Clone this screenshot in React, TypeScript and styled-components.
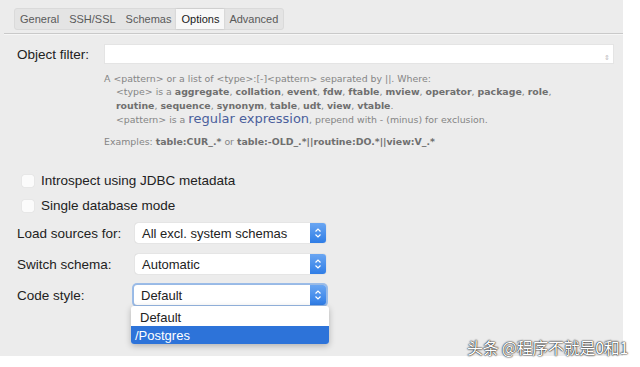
import styled, { createGlobalStyle } from "styled-components";

const Global = createGlobalStyle`
	html, body {
		margin: 0;
		padding: 0;
		background: #ffffff;
	}
	body {
		font-family: "Liberation Sans", Arial, sans-serif;
		color: #222;
	}
`;

const Page = styled.div`
	position: relative;
	width: 640px;
	height: 367px;
	overflow: hidden;
	background: #fff;
`;

const Window = styled.div`
	width: 623px;
	height: 356px;
	background: #ececec;
	display: flex;
	flex-direction: column;
`;

const TabBar = styled.div`
	display: flex;
	align-self: flex-start;
	margin: 8px 0 0 14px;
	height: 20px;
	background: #e4e4e4;
	border: 1px solid #dadada;
	border-radius: 3px;
`;

const Tab = styled.div<{ active?: boolean }>`
	display: flex;
	align-items: center;
	padding: 0 5px;
	font-size: 11px;
	color: ${({ active }) => (active ? "#1a1a1a" : "#5a5a5a")};
	background: ${({ active }) => (active ? "#f8f8f8" : "transparent")};
	box-shadow: ${({ active }) => (active ? "0 0 2px rgba(0,0,0,0.15)" : "none")};
`;

const Divider = styled.div`
	margin-top: 3px;
	height: 1px;
	background: #c9c9c9;
	border-bottom: 1px solid #f6f6f6;
	margin-left: 4px;
`;

const Body = styled.div`
	display: flex;
	flex-direction: column;
	padding: 9px 9px 0 17px;
`;

const FilterRow = styled.div`
	display: flex;
	align-items: center;
`;

const Label = styled.div<{ w?: number }>`
	width: ${({ w }) => w ?? 118}px;
	font-size: 13.5px;
	color: #222;
	flex-shrink: 0;
`;

const TextInput = styled.div`
	position: relative;
	flex: 1;
	height: 18px;
	background: #fff;
	border: 1px solid #e4e4e4;
`;

const Grip = styled.span`
	position: absolute;
	right: 3px;
	bottom: 1px;
	font-size: 7px;
	color: #bbb;
`;

const Help = styled.div`
	margin: 8px 0 0 87px;
	font-family: "DejaVu Sans", "Liberation Sans", sans-serif;
	font-size: 9.4px;
	line-height: 13.3px;
	color: #858585;
`;

const HelpLine = styled.div<{ indent?: boolean }>`
	padding-left: ${({ indent }) => (indent ? 12 : 0)}px;
	white-space: nowrap;
`;

const Bold = styled.b`
	color: #6f6f6f;
`;

const Link = styled.span`
	color: #4a5f9c;
	font-size: 13px;
`;

const Examples = styled.div`
	margin-top: 9px;
	white-space: nowrap;
`;

const Checks = styled.div`
	display: flex;
	flex-direction: column;
	gap: 8px;
	margin-top: 24px;
	padding-left: 5px;
`;

const CheckRow = styled.label`
	display: flex;
	align-items: center;
	gap: 7px;
	font-size: 13.5px;
	color: #222;
	height: 17px;
`;

const Box = styled.span`
	width: 12px;
	height: 12px;
	background: #fbfbfb;
	border-radius: 2px;
	box-shadow: 0 0 1px rgba(0, 0, 0, 0.2);
`;

const Fields = styled.div`
	display: flex;
	flex-direction: column;
	gap: 11px;
	margin-top: 9px;
`;

const FieldRow = styled.div`
	display: flex;
	align-items: center;
	height: 20px;
`;

const SelectWrap = styled.div`
	position: relative;
	width: 191px;
`;

const Select = styled.div<{ focused?: boolean }>`
	display: flex;
	align-items: center;
	height: 20px;
	background: #fff;
	border-radius: 3px;
	font-size: 13px;
	color: #222;
	padding-left: 7px;
	box-shadow: ${({ focused }) =>
		focused
			? "0 0 0 2px rgba(90, 150, 230, 0.55), 0 0 1px rgba(0,0,0,0.3)"
			: "0 0 1px rgba(0,0,0,0.3)"};
	margin-left: ${({ focused }) => (focused ? "-1px" : "0")};
`;

const SelectText = styled.span`
	flex: 1;
`;

const Stepper = styled.span`
	width: 16px;
	height: 20px;
	border-radius: 0 3px 3px 0;
	background: linear-gradient(#6aa6f2, #2f7de6);
	display: flex;
	align-items: center;
	justify-content: center;
`;

const Menu = styled.div`
	position: absolute;
	left: -4px;
	top: 21px;
	width: 198px;
	background: #fff;
	box-shadow: 0 2px 6px rgba(0, 0, 0, 0.25);
	border-radius: 3px;
	padding: 2px 0 0;
	z-index: 2;
`;

const MenuItem = styled.div<{ active?: boolean }>`
	height: 18px;
	display: flex;
	align-items: center;
	padding-left: ${({ active }) => (active ? 4 : 9)}px;
	font-size: 13px;
	color: ${({ active }) => (active ? "#fff" : "#222")};
	background: ${({ active }) => (active ? "#2d73d9" : "transparent")};
	border-radius: ${({ active }) => (active ? "0 0 3px 3px" : "0")};
`;

const Watermark = styled.div`
	position: absolute;
	right: 12px;
	bottom: 8px;
	font-family: "Noto Sans CJK SC", sans-serif;
	font-size: 16px;
	color: #fff;
	text-shadow: 0 0 2px #000, 0 0 1px #000;
	letter-spacing: -0.3px;
`;

const Arrows = () => (
	<svg width="8" height="12" viewBox="0 0 8 12">
		<path d="M1.5 4.5 L4 2 L6.5 4.5 M1.5 7.5 L4 10 L6.5 7.5" fill="none" stroke="#fff" strokeWidth="1.2" />
	</svg>
);

const SelectBox = ({ value, focused, children }: { value: string; focused?: boolean; children?: React.ReactNode }) => (
	<SelectWrap>
		<Select focused={focused}>
			<SelectText>{value}</SelectText>
			<Stepper>
				<Arrows />
			</Stepper>
		</Select>
		{children}
	</SelectWrap>
);

const App = () => {
	return (
		<Page>
			<Global />
			<Window>
				<TabBar>
					<Tab>General</Tab>
					<Tab>SSH/SSL</Tab>
					<Tab>Schemas</Tab>
					<Tab active>Options</Tab>
					<Tab>Advanced</Tab>
				</TabBar>
				<Divider />
				<Body>
					<FilterRow>
						<Label w={87}>Object filter:</Label>
						<TextInput>
							<Grip>⇕</Grip>
						</TextInput>
					</FilterRow>
					<Help>
						<HelpLine>A &lt;pattern&gt; or a list of &lt;type&gt;:[-]&lt;pattern&gt; separated by ||. Where:</HelpLine>
						<HelpLine indent>
							&lt;type&gt; is a <Bold>aggregate</Bold>, <Bold>collation</Bold>, <Bold>event</Bold>, <Bold>fdw</Bold>,{" "}
							<Bold>ftable</Bold>, <Bold>mview</Bold>, <Bold>operator</Bold>, <Bold>package</Bold>, <Bold>role</Bold>,
						</HelpLine>
						<HelpLine indent>
							<Bold>routine</Bold>, <Bold>sequence</Bold>, <Bold>synonym</Bold>, <Bold>table</Bold>, <Bold>udt</Bold>,{" "}
							<Bold>view</Bold>, <Bold>vtable</Bold>.
						</HelpLine>
						<HelpLine indent>
							&lt;pattern&gt; is a <Link>regular expression</Link>, prepend with - (minus) for exclusion.
						</HelpLine>
						<Examples>
							Examples: <Bold>table:CUR_.*</Bold> or <Bold>table:-OLD_.*||routine:DO.*||view:V_.*</Bold>
						</Examples>
					</Help>
					<Checks>
						<CheckRow>
							<Box />
							Introspect using JDBC metadata
						</CheckRow>
						<CheckRow>
							<Box />
							Single database mode
						</CheckRow>
					</Checks>
					<Fields>
						<FieldRow>
							<Label>Load sources for:</Label>
							<SelectBox value="All excl. system schemas" />
						</FieldRow>
						<FieldRow>
							<Label>Switch schema:</Label>
							<SelectBox value="Automatic" />
						</FieldRow>
						<FieldRow>
							<Label>Code style:</Label>
							<SelectBox value="Default" focused>
								<Menu>
									<MenuItem>Default</MenuItem>
									<MenuItem active>/Postgres</MenuItem>
								</Menu>
							</SelectBox>
						</FieldRow>
					</Fields>
				</Body>
			</Window>
			<Watermark>头条 @程序不就是0和1</Watermark>
		</Page>
	);
};

export default App;
